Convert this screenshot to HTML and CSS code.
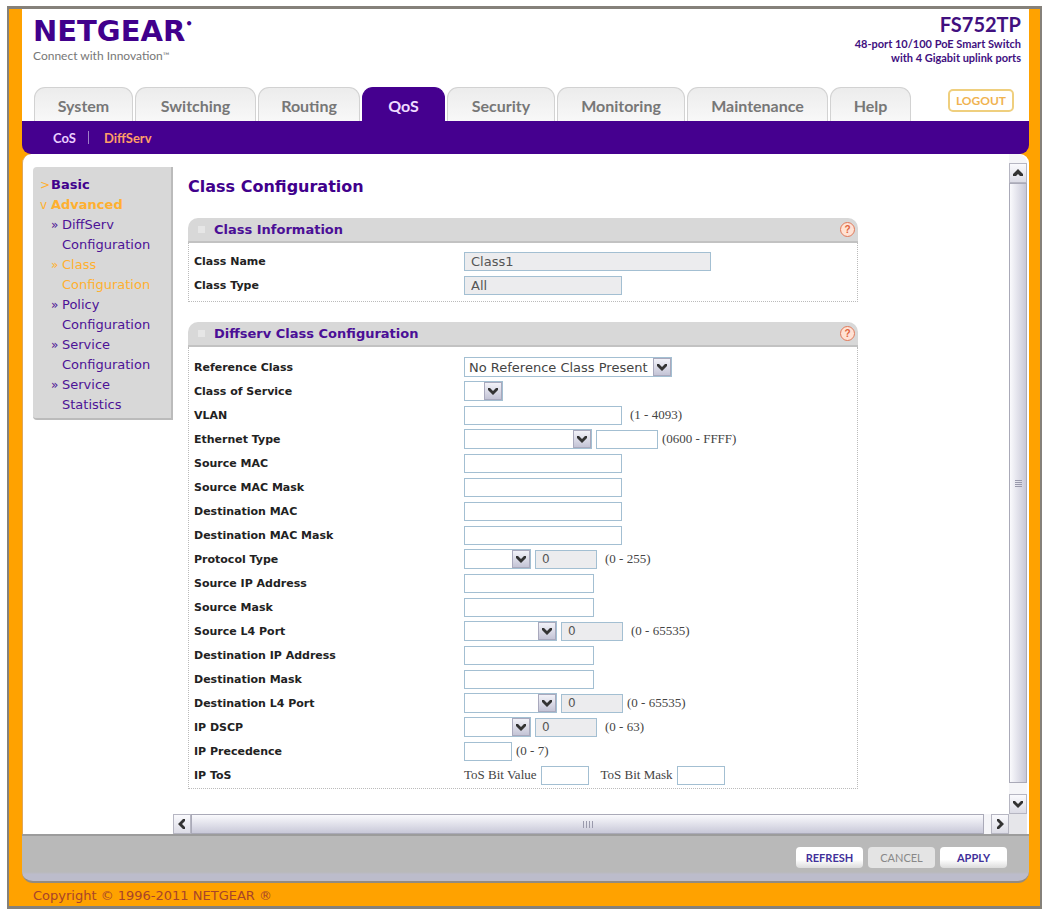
FILE: index.html
```html
<!DOCTYPE html>
<html lang="en">
<head>
<meta charset="utf-8">
<title>NETGEAR FS752TP - Class Configuration</title>
<link rel="stylesheet" href="styles.css">
</head>
<body>
<svg class="defs" aria-hidden="true">
  <symbol id="down" viewBox="0 0 10 8"><path d="M0 1h2l3 3 3-3h2v2L5 8 0 3z"/></symbol>
  <symbol id="up" viewBox="0 0 10 8"><path d="M0 7h3l2-2 2 2h3V5L5 0 0 5z"/></symbol>
  <symbol id="left" viewBox="0 0 8 10"><path d="M7 0v2L4 5l3 3v2H5L0 5l5-5z"/></symbol>
  <symbol id="right" viewBox="0 0 8 10"><path d="M1 0v2l3 3-3 3v2h2l5-5-5-5z"/></symbol>
</svg>
<div class="frame">
  <header class="header">
    <div class="brandrow">
      <div>
        <div class="logo">NETGEAR<span class="dot">•</span></div>
        <div class="tagline">Connect with Innovation<span class="tm">™</span></div>
      </div>
      <div class="product">
        <div class="model">FS752TP</div>
        <div>48-port 10/100 PoE Smart Switch</div>
        <div>with 4 Gigabit uplink ports</div>
      </div>
    </div>
    <div class="tabrow">
      <nav class="tabs">
        <a href="#">System</a><a href="#">Switching</a><a href="#">Routing</a><a href="#" class="active">QoS</a><a href="#">Security</a><a href="#">Monitoring</a><a href="#">Maintenance</a><a href="#">Help</a>
      </nav>
      <button class="logout" type="button">LOGOUT</button>
    </div>
  </header>
  <nav class="subnav"><a href="#">CoS</a><span class="bar"></span><a href="#" class="current">DiffServ</a></nav>
  <div class="panel">
    <aside class="sidebar">
      <nav class="menu">
        <a href="#" class="top"><span class="mark">&gt;</span>Basic</a>
        <a href="#" class="top current"><span class="mark">v</span>Advanced</a>
        <a href="#"><span class="mark">»</span>DiffServ Configuration</a>
        <a href="#" class="current"><span class="mark">»</span>Class Configuration</a>
        <a href="#"><span class="mark">»</span>Policy Configuration</a>
        <a href="#"><span class="mark">»</span>Service Configuration</a>
        <a href="#"><span class="mark">»</span>Service Statistics</a>
      </nav>
    </aside>
    <main class="main">
      <h1>Class Configuration</h1>
      <section class="card">
        <h2><span class="grip"></span>Class Information<button class="help" type="button" aria-label="Help">?</button></h2>
        <div class="rows info">
          <div class="row"><label for="cname">Class Name</label><div class="ctl"><input id="cname" class="w-xl" value="Class1" disabled></div></div>
          <div class="row"><label for="ctype">Class Type</label><div class="ctl"><input id="ctype" class="w-l" value="All" disabled></div></div>
        </div>
      </section>
      <section class="card">
        <h2><span class="grip"></span>Diffserv Class Configuration<button class="help" type="button" aria-label="Help">?</button></h2>
        <form class="rows">
          <div class="row"><label for="ref">Reference Class</label><div class="ctl"><span class="select s-xl"><select id="ref"><option>No Reference Class Present</option></select><svg><use href="#down"/></svg></span></div></div>
          <div class="row"><label for="cos">Class of Service</label><div class="ctl"><span class="select s-xs"><select id="cos"><option></option></select><svg><use href="#down"/></svg></span></div></div>
          <div class="row"><label for="vlan">VLAN</label><div class="ctl"><input id="vlan" class="w-l"><span class="hint">(1 - 4093)</span></div></div>
          <div class="row"><label for="eth">Ethernet Type</label><div class="ctl"><span class="select s-l"><select id="eth"><option></option></select><svg><use href="#down"/></svg></span><input class="w-s" aria-label="Ethernet type value"><span>(0600 - FFFF)</span></div></div>
          <div class="row"><label for="smac">Source MAC</label><div class="ctl"><input id="smac" class="w-l"></div></div>
          <div class="row"><label for="smacm">Source MAC Mask</label><div class="ctl"><input id="smacm" class="w-l"></div></div>
          <div class="row"><label for="dmac">Destination MAC</label><div class="ctl"><input id="dmac" class="w-l"></div></div>
          <div class="row"><label for="dmacm">Destination MAC Mask</label><div class="ctl"><input id="dmacm" class="w-l"></div></div>
          <div class="row"><label for="proto">Protocol Type</label><div class="ctl"><span class="select s-s"><select id="proto"><option></option></select><svg><use href="#down"/></svg></span><input class="w-s" value="0" disabled aria-label="Protocol value"><span class="hint">(0 - 255)</span></div></div>
          <div class="row"><label for="sip">Source IP Address</label><div class="ctl"><input id="sip" class="w-m"></div></div>
          <div class="row"><label for="smask">Source Mask</label><div class="ctl"><input id="smask" class="w-m"></div></div>
          <div class="row"><label for="sl4">Source L4 Port</label><div class="ctl"><span class="select s-m"><select id="sl4"><option></option></select><svg><use href="#down"/></svg></span><input class="w-s" value="0" disabled aria-label="Source port value"><span class="hint">(0 - 65535)</span></div></div>
          <div class="row"><label for="dip">Destination IP Address</label><div class="ctl"><input id="dip" class="w-m"></div></div>
          <div class="row"><label for="dmask">Destination Mask</label><div class="ctl"><input id="dmask" class="w-m"></div></div>
          <div class="row"><label for="dl4">Destination L4 Port</label><div class="ctl"><span class="select s-m"><select id="dl4"><option></option></select><svg><use href="#down"/></svg></span><input class="w-s" value="0" disabled aria-label="Destination port value"><span>(0 - 65535)</span></div></div>
          <div class="row"><label for="dscp">IP DSCP</label><div class="ctl"><span class="select s-s"><select id="dscp"><option></option></select><svg><use href="#down"/></svg></span><input class="w-s" value="0" disabled aria-label="DSCP value"><span class="hint">(0 - 63)</span></div></div>
          <div class="row"><label for="prec">IP Precedence</label><div class="ctl"><input id="prec" class="w-xs"><span>(0 - 7)</span></div></div>
          <div class="row"><span class="name">IP ToS</span><div class="ctl"><label for="tosv">ToS Bit Value</label><input id="tosv" class="w-xs"><label for="tosm" class="second">ToS Bit Mask</label><input id="tosm" class="w-xs"></div></div>
        </form>
      </section>
    </main>
    <div class="vscroll">
      <span class="sbtn"><svg><use href="#up"/></svg></span>
      <span class="thumb"><i></i></span>
      <span class="sbtn"><svg><use href="#down"/></svg></span>
    </div>
    <div class="hscroll">
      <span class="sbtn"><svg><use href="#left"/></svg></span>
      <span class="thumb"><i></i></span>
      <span class="sbtn"><svg><use href="#right"/></svg></span>
    </div>
    <div class="corner"></div>
  </div>
  <div class="actions">
    <button type="button">REFRESH</button>
    <button type="button" disabled>CANCEL</button>
    <button type="button">APPLY</button>
  </div>
  <footer class="copyright">Copyright © 1996-2011 NETGEAR ®</footer>
</div>
</body>
</html>
```
FILE: styles.css
```css
* { box-sizing: border-box; }
body {
  margin: 0;
  padding: 6px 0 0 7px;
  min-height: 100vh;
  display: flex;
  background: #fff;
  font-family: "DejaVu Sans", Verdana, sans-serif;
  font-size: 13px;
  color: #222;
}
a { text-decoration: none; color: inherit; }
.defs { display: none; }
.frame {
  flex: 1;
  display: flex;
  flex-direction: column;
  background: #ffa200;
  border: 2px solid #85817a;
  border-top-width: 3px;
  border-bottom-width: 3px;
  padding: 0 11px 0 13px;
}

.header { background: #fff; height: 112px; display: flex; flex-direction: column; justify-content: space-between; }
.brandrow { display: flex; justify-content: space-between; padding: 4px 8px 0 11px; }
.logo { display: flex; font-size: 29px; line-height: 36px; font-weight: bold; color: #41008c; }
.dot { font-size: 12px; line-height: 22px; }
.tagline { font: 12px/14px Lato, sans-serif; color: #777; }
.tm { font-size: 9px; vertical-align: top; }
.product { text-align: right; font: bold 11px/14px Lato, sans-serif; color: #41107f; }
.model { font: bold 20px/22px Lato, sans-serif; margin-bottom: 2px; }

.tabrow { display: flex; align-items: flex-end; padding: 0 15px 0 12px; }
.tabs {
  flex: 877;
  display: grid;
  grid-template-columns: 99fr 121fr 102fr 83fr 108fr 128fr 141fr 81fr;
  gap: 2px;
}
.tabs a {
  height: 34px;
  display: flex;
  align-items: center;
  justify-content: center;
  padding-top: 2px;
  border: 1px solid #d2d2d2;
  border-bottom: 0;
  border-radius: 11px 11px 0 0;
  background: linear-gradient(#ececec, #f8f8f8);
  font: bold 16px/20px Lato, sans-serif;
  color: #777;
}
.tabs .active { background: #45008f; border-color: #45008f; color: #f0dcff; }
.logout {
  flex: 62;
  margin: 0 0 9px 37px;
  height: 23px;
  padding: 0;
  border: 2px solid #efcf7e;
  border-radius: 5px;
  background: #fff;
  font: bold 12px/16px Lato, sans-serif;
  color: #f0b350;
}

.subnav {
  height: 33px;
  display: flex;
  align-items: center;
  padding-left: 31px;
  border-radius: 0 0 9px 9px;
  background: #45008f;
  font: bold 13px/20px Lato, sans-serif;
  color: #eccfff;
}
.bar { width: 1px; height: 13px; margin: 0 15px 0 12px; background: #a080c8; }
.subnav .current { color: #ff9e68; }

.panel {
  flex: 1;
  display: grid;
  grid-template: 1fr 20px / 150px 1fr 18px;
  padding-right: 2px;
  background: #fff;
  border-left: 1px solid #dfa75c;
  border-radius: 9px 9px 0 0;
}
.sidebar { grid-row: 1 / 3; padding: 13px 0 0 10px; }
.menu {
  padding: 8px 8px 3px 7px;
  background: #d8d8d8;
  border-right: 2px solid #bbb;
  border-bottom: 2px solid #bbb;
  border-radius: 4px 0 0 4px;
  color: #4c1296;
  line-height: 20px;
}
.menu a { display: grid; grid-template-columns: 11px 1fr; padding-left: 11px; }
.menu .top { padding-left: 0; font-weight: bold; color: #41008c; }
.menu .top .mark { font-weight: normal; color: #ffb030; }
.mark { font-size: 12px; }
.menu .current, .menu .top.current { color: #ffb030; }

.main { padding: 21px 0 23px 15px; max-width: 685px; }
h1 { margin: 0; font-size: 16px; line-height: 24px; color: #41008c; }
.card { margin-top: 20px; }
h1 + .card { margin-top: 19px; }
h2 {
  display: flex;
  align-items: center;
  height: 25px;
  margin: 0;
  padding: 0 3px 0 10px;
  background: #d8d8d8;
  border-bottom: 2px solid #c2c2c2;
  border-radius: 10px 10px 0 0;
  font-size: 13px;
  color: #4b0f96;
}
.grip { width: 7px; height: 7px; margin-right: 9px; background: #e6e6e6; }
.help {
  width: 15px;
  height: 15px;
  margin-left: auto;
  padding: 0;
  border: 1px solid #e0795a;
  border-radius: 50%;
  background: #ffe2d4;
  font: bold 10px/12px "Liberation Sans", sans-serif;
  color: #e0643c;
}
.rows { padding: 8px 0 1px 5px; border: 1px dotted #bbb; border-top: 0; }
.row { display: grid; grid-template-columns: 270px 1fr; align-items: center; height: 24px; }
.row > label, .name { font-size: 11px; font-weight: bold; }
.info { padding: 6px 0 4px 5px; }
.ctl { display: flex; align-items: center; gap: 4px; font: 13px/18px "Liberation Serif", serif; color: #444; }
.hint { margin-left: 4px; }
.second { margin-left: 8px; }
input, select {
  height: 19px;
  margin: 0;
  padding: 0 6px;
  border: 1px solid #a3bfd2;
  border-radius: 0;
  background: #fff;
  font: 13px/17px "DejaVu Sans", Verdana, sans-serif;
  color: #444;
}
input:disabled { background: #ececee; color: #555; }
.w-xl { width: 247px; }
.w-l { width: 158px; }
.w-m { width: 130px; }
.w-s { width: 62px; font-size: 12px; }
.w-xs { width: 48px; }
.select { position: relative; display: flex; }
.select select { width: 100%; height: 20px; padding: 0 4px; appearance: none; font-size: 13px; }
.select svg {
  position: absolute;
  top: 1px;
  right: 1px;
  width: 18px;
  height: 18px;
  padding: 4px 3px;
  border: 1px solid #a9a9bd;
  background: linear-gradient(#f2f2f8, #c4c4d6);
  fill: #333;
  pointer-events: none;
}
.s-xl { width: 208px; }
.s-l { width: 128px; }
.s-m { width: 93px; }
.s-s { width: 67px; }
.s-xs { width: 39px; }

.vscroll { grid-column: 3; display: flex; flex-direction: column; padding-top: 9px; background: #f5f5f8; border-radius: 0 9px 0 0; }
.hscroll { grid-column: 2; display: flex; background: #f5f5f8; }
.sbtn {
  width: 18px;
  height: 20px;
  display: flex;
  align-items: center;
  justify-content: center;
  border: 1px solid #b6b6c2;
  background: linear-gradient(#fafafd, #dcdce6);
}
.sbtn svg { width: 10px; height: 10px; fill: #333; }
.thumb { flex: 1; display: flex; align-items: center; justify-content: center; border: 1px solid #aaaab8; }
.vscroll .thumb { margin-bottom: 11px; background: linear-gradient(90deg, #fafafd, #c8c8d8); }
.hscroll .thumb { margin-right: 7px; background: linear-gradient(#fafafd, #c8c8d8); }
.vscroll i { width: 7px; height: 7px; background: repeating-linear-gradient(#9a9aac 0 1px, transparent 1px 2px); }
.hscroll i { width: 10px; height: 7px; background: repeating-linear-gradient(90deg, #9a9aac 0 1px, transparent 1px 3px); }
.corner { grid-column: 3; background: #e6e6ea; }

.actions {
  height: 49px;
  display: flex;
  justify-content: flex-end;
  gap: 5px;
  padding: 11px 22px 0 0;
  background: linear-gradient(#b9b9b9 80%, #bcbccb 85%);
  border-top: 2px solid #9c9c9c;
  border-bottom: 2px solid #938b80;
  border-radius: 0 0 11px 11px;
}
.actions button {
  width: 67px;
  height: 21px;
  padding: 0;
  border: 0;
  border-radius: 4px;
  background: linear-gradient(#fff 60%, #dcdcdc);
  font: bold 11px/16px Lato, sans-serif;
  color: #41309a;
}
.actions button:disabled { background: #e4e4e4; font-weight: normal; color: #888; }
.copyright { padding: 5px 11px 2px; line-height: 16px; font-size: 13px; color: #a8442a; }
```
